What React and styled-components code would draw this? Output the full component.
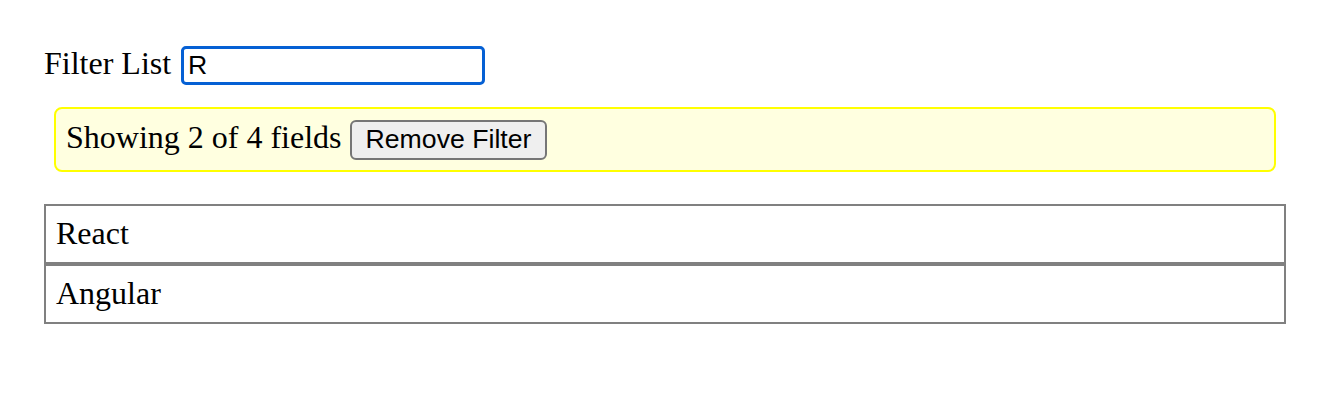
import React, { useState } from "react";
import styled, { createGlobalStyle } from "styled-components";

const GlobalStyle = createGlobalStyle`
	html, body {
		margin: 0;
		padding: 0;
		background: #ffffff;
	}
	body {
		font-family: "Liberation Serif", "Times New Roman", serif;
		font-size: 32px;
		color: #000000;
	}
`;

const Page = styled.div`
	padding: 45px 44px 0;
`;

const FilterRow = styled.label`
	display: flex;
	align-items: baseline;
	gap: 10px;
	margin-bottom: 22px;
`;

const FilterInput = styled.input`
	box-sizing: border-box;
	width: 304px;
	height: 39px;
	padding: 2px 4px;
	border: 3px solid #0560d4;
	border-radius: 5px;
	outline: none;
	font-family: "Liberation Sans", Arial, sans-serif;
	font-size: 26.67px;
	color: #000000;
	background: #ffffff;
`;

const Notice = styled.div`
	margin: 0 10px 32px;
	padding: 10px;
	border: 2px solid #ffff00;
	border-radius: 8px;
	background: #ffffe0;
	line-height: normal;
`;

const Button = styled.button`
	padding: 2px 14px;
	height: 40px;
	border: 2px solid #767676;
	border-radius: 6px;
	background: #efefef;
	font-family: "Liberation Sans", Arial, sans-serif;
	font-size: 26.67px;
	color: #000000;
	vertical-align: baseline;
`;

const List = styled.ul`
	list-style: none;
	margin: 0;
	padding: 0;
`;

const Item = styled.li`
	padding: 9.5px 10px;
	border: 2px solid #808080;
	line-height: normal;
`;

const fields = ["React", "Angular", "Vue", "Svelte"];

export default function App() {
	const [query, setQuery] = useState("R");
	const shown = query
		? fields.filter((f) => f.toLowerCase().includes(query.toLowerCase())).filter((f) => f !== "Vue")
		: fields;

	return (
		<>
			<GlobalStyle />
			<Page>
				<FilterRow>
					Filter List
					<FilterInput
						autoFocus
						value={query}
						onChange={(e) => setQuery(e.target.value)}
					/>
				</FilterRow>
				{query && (
					<Notice>
						Showing {shown.length} of {fields.length} fields{" "}
						<Button onClick={() => setQuery("")}>Remove Filter</Button>
					</Notice>
				)}
				<List>
					{shown.map((f) => (
						<Item key={f}>{f}</Item>
					))}
				</List>
			</Page>
		</>
	);
}
